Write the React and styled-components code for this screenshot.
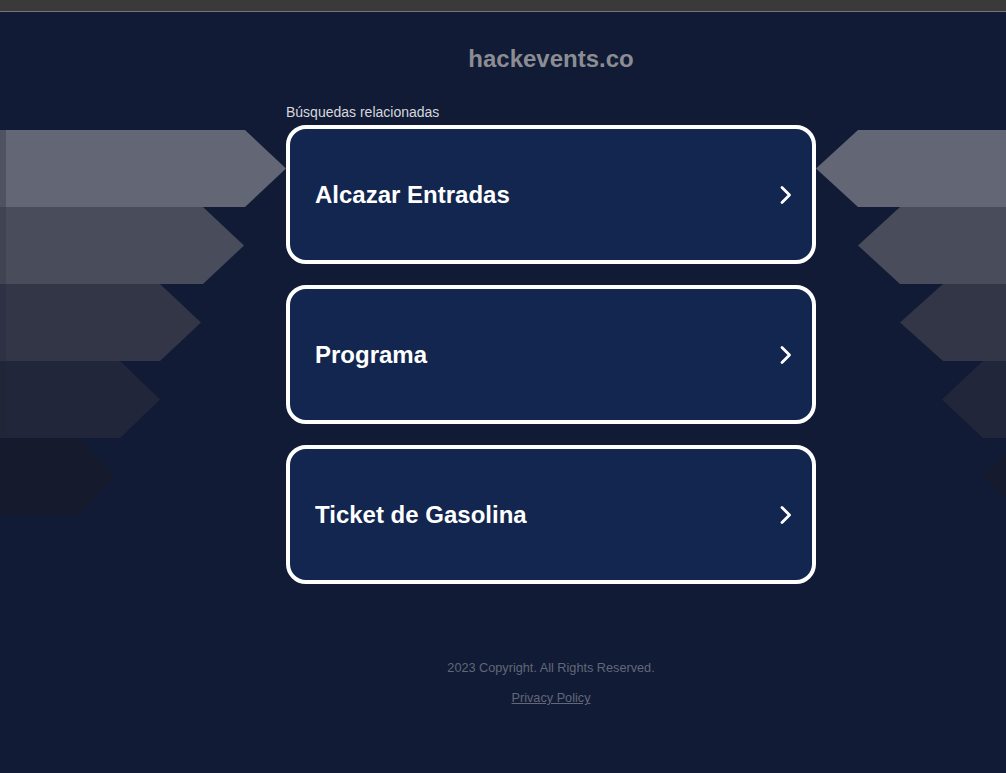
import React from "react";
import styled, { createGlobalStyle } from "styled-components";

const GlobalStyle = createGlobalStyle`
  html, body {
    margin: 0;
    padding: 0;
    background: #111b35;
    font-family: "Liberation Sans", Arial, sans-serif;
  }
`;

const searches = ["Alcazar Entradas", "Programa", "Ticket de Gasolina"];

// rows of the decorative arrows: body end and tip x, colour
const leftRows = [
  { body: 245, tip: 286, color: "#636674", edge: "#4f5361" },
  { body: 203, tip: 244, color: "#494c5b", edge: "#3f4352" },
  { body: 160, tip: 201, color: "#323647", edge: "#2e3244" },
  { body: 120, tip: 160, color: "#22263a", edge: "#212538" },
  { body: 78, tip: 115, color: "#161a2d", edge: "#161a2d" },
];

const rightRows = [
  { tip: 0, body: 42, color: "#636674" },
  { tip: 42, body: 84, color: "#494c5b" },
  { tip: 84, body: 127, color: "#323647" },
  { tip: 126, body: 167, color: "#22263a" },
  { tip: 167, body: 206, color: "#151a2d" },
];

const ROW = 77;

function LeftArrows() {
  return (
    <svg width="286" height={ROW * 5} viewBox={`0 0 286 ${ROW * 5}`}>
      {leftRows.map((r, i) => {
        const y = i * ROW;
        return (
          <g key={i}>
            <polygon
              points={`0,${y} ${r.body},${y} ${r.tip},${y + ROW / 2} ${r.body},${y + ROW} 0,${y + ROW}`}
              fill={r.color}
            />
            <rect x="0" y={y} width="6" height={ROW} fill={r.edge} />
          </g>
        );
      })}
    </svg>
  );
}

function RightArrows() {
  return (
    <svg width="190" height={ROW * 5} viewBox={`0 0 190 ${ROW * 5}`}>
      {rightRows.map((r, i) => {
        const y = i * ROW;
        return (
          <polygon
            key={i}
            points={`190,${y} ${r.body},${y} ${r.tip},${y + ROW / 2} ${r.body},${y + ROW} 190,${y + ROW}`}
            fill={r.color}
          />
        );
      })}
    </svg>
  );
}

function Chevron() {
  return (
    <svg width="14" height="20" viewBox="0 0 14 20">
      <path
        d="M3 2.5 L10.5 10 L3 17.5"
        fill="none"
        stroke="#ffffff"
        strokeWidth="2.8"
        strokeLinecap="round"
        strokeLinejoin="round"
      />
    </svg>
  );
}

export default function App() {
  return (
    <>
      <GlobalStyle />
      <TopBar />
      <Stage>
        <Decor>
          <LeftArrows />
        </Decor>
        <Main>
          <Domain>hackevents.co</Domain>
          <Label>Búsquedas relacionadas</Label>
          <CardList>
            {searches.map((s) => (
              <Card key={s}>
                <CardTitle>{s}</CardTitle>
                <Chevron />
              </Card>
            ))}
          </CardList>
          <Footer>
            <Copyright>2023 Copyright. All Rights Reserved.</Copyright>
            <PrivacyLink href="#">Privacy Policy</PrivacyLink>
          </Footer>
        </Main>
        <Decor>
          <RightArrows />
        </Decor>
      </Stage>
    </>
  );
}

const TopBar = styled.div`
  height: 11px;
  background: #3a3a3b;
  border-bottom: 1px solid #76767c;
`;

const Stage = styled.div`
  display: grid;
  grid-template-columns: 286px 530px 1fr;
  min-height: 761px;
`;

const Decor = styled.div`
  padding-top: 118px;
  overflow: hidden;
  svg {
    display: block;
  }
`;

const Main = styled.div`
  display: flex;
  flex-direction: column;
`;

const Domain = styled.h1`
  margin: 34px 0 0;
  text-align: center;
  font-size: 24px;
  line-height: 26px;
  font-weight: bold;
  color: #8c8d93;
`;

const Label = styled.div`
  margin-top: 32px;
  font-size: 14px;
  line-height: 16px;
  color: #d6d8de;
`;

const CardList = styled.div`
  margin-top: 5px;
  display: flex;
  flex-direction: column;
  gap: 21px;
`;

const Card = styled.a`
  box-sizing: border-box;
  height: 139px;
  display: flex;
  align-items: center;
  justify-content: space-between;
  padding: 0 19px 0 25px;
  border: 4px solid #ffffff;
  border-radius: 20px;
  background: #12264f;
  cursor: pointer;
`;

const CardTitle = styled.span`
  font-size: 24px;
  font-weight: bold;
  color: #ffffff;
`;

const Footer = styled.div`
  margin-top: 77px;
  display: flex;
  flex-direction: column;
  align-items: center;
  gap: 16px;
  font-size: 12.7px;
  line-height: 14px;
  color: #626779;
`;

const Copyright = styled.div``;

const PrivacyLink = styled.a`
  color: #626779;
  text-decoration: underline;
`;
